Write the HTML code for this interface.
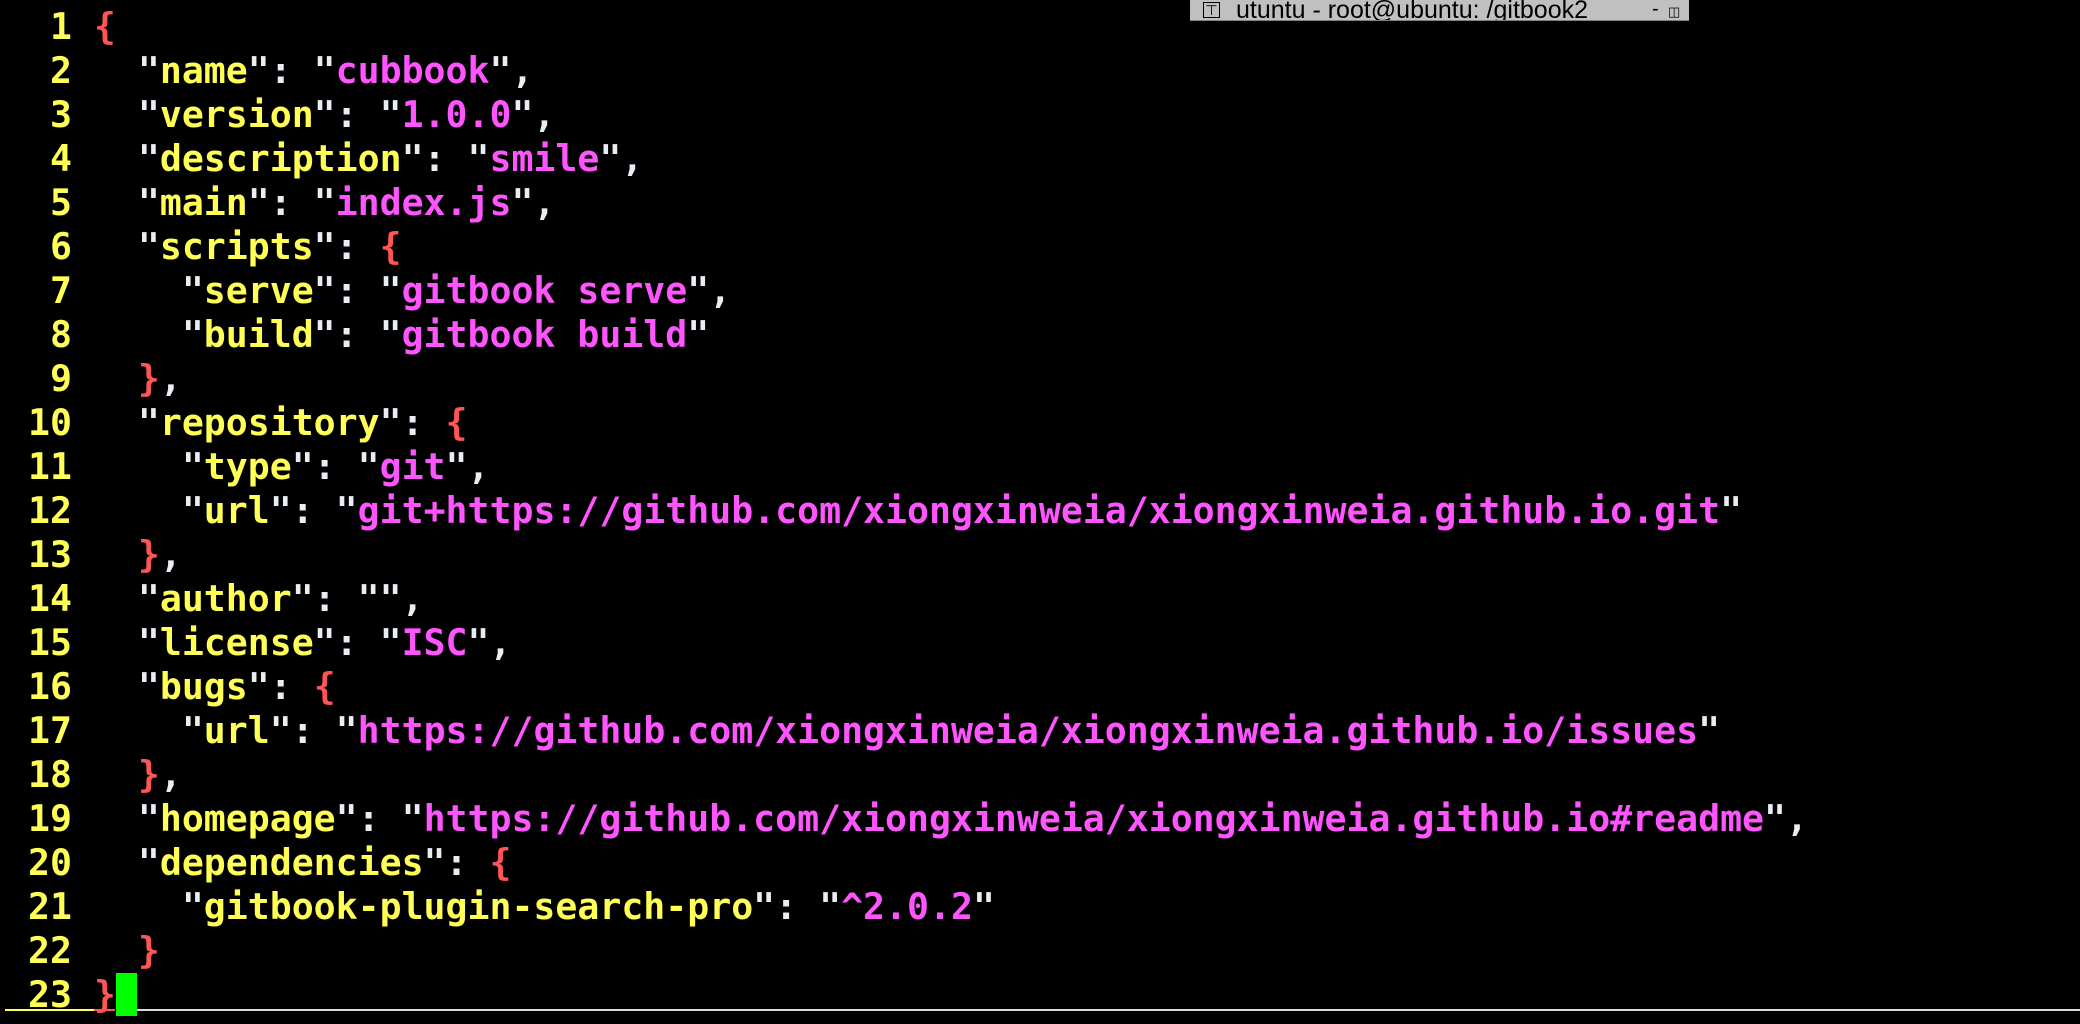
<!DOCTYPE html>
<html><head><meta charset="utf-8"><style>
html,body{margin:0;padding:0;background:#000;width:2080px;height:1024px;overflow:hidden}
pre{position:absolute;left:6px;top:5px;margin:0;font-family:"DejaVu Sans Mono","Liberation Mono",monospace;font-weight:bold;font-size:36.5px;line-height:44px;color:#e8e8e8;white-space:pre}
.n{color:#ffff55}.k{color:#ffff55}.s{color:#ff55ff}.b{color:#ff5555}.p{color:#e8eef4}
#title{position:absolute;left:1190px;top:0;width:499px;height:20px;background:#c0c0c0;border-bottom:1px solid #808080;font-family:"Liberation Sans",sans-serif;font-size:25px;line-height:26px;color:#000;overflow:hidden;white-space:nowrap}
#cur{position:absolute;left:116px;top:973px;width:21px;height:43px;background:#00ff00}
#ul1{position:absolute;left:5px;top:1009px;width:89px;height:2px;background:#ffff55}
#ul2{position:absolute;left:94px;top:1009px;width:21px;height:2px;background:#ff5555}
#ul3{position:absolute;left:137px;top:1009px;width:1943px;height:2px;background:#dcdcdc}
</style></head><body>
<pre><span class="n">  1 </span><span class="b">{</span>
<span class="n">  2 </span>  <span class="p">"</span><span class="k">name</span><span class="p">": "</span><span class="s">cubbook</span><span class="p">",</span>
<span class="n">  3 </span>  <span class="p">"</span><span class="k">version</span><span class="p">": "</span><span class="s">1.0.0</span><span class="p">",</span>
<span class="n">  4 </span>  <span class="p">"</span><span class="k">description</span><span class="p">": "</span><span class="s">smile</span><span class="p">",</span>
<span class="n">  5 </span>  <span class="p">"</span><span class="k">main</span><span class="p">": "</span><span class="s">index.js</span><span class="p">",</span>
<span class="n">  6 </span>  <span class="p">"</span><span class="k">scripts</span><span class="p">": </span><span class="b">{</span>
<span class="n">  7 </span>    <span class="p">"</span><span class="k">serve</span><span class="p">": "</span><span class="s">gitbook serve</span><span class="p">",</span>
<span class="n">  8 </span>    <span class="p">"</span><span class="k">build</span><span class="p">": "</span><span class="s">gitbook build</span><span class="p">"</span>
<span class="n">  9 </span>  <span class="b">}</span><span class="p">,</span>
<span class="n"> 10 </span>  <span class="p">"</span><span class="k">repository</span><span class="p">": </span><span class="b">{</span>
<span class="n"> 11 </span>    <span class="p">"</span><span class="k">type</span><span class="p">": "</span><span class="s">git</span><span class="p">",</span>
<span class="n"> 12 </span>    <span class="p">"</span><span class="k">url</span><span class="p">": "</span><span class="s">git+https://github.com/xiongxinweia/xiongxinweia.github.io.git</span><span class="p">"</span>
<span class="n"> 13 </span>  <span class="b">}</span><span class="p">,</span>
<span class="n"> 14 </span>  <span class="p">"</span><span class="k">author</span><span class="p">": "",</span>
<span class="n"> 15 </span>  <span class="p">"</span><span class="k">license</span><span class="p">": "</span><span class="s">ISC</span><span class="p">",</span>
<span class="n"> 16 </span>  <span class="p">"</span><span class="k">bugs</span><span class="p">": </span><span class="b">{</span>
<span class="n"> 17 </span>    <span class="p">"</span><span class="k">url</span><span class="p">": "</span><span class="s">https://github.com/xiongxinweia/xiongxinweia.github.io/issues</span><span class="p">"</span>
<span class="n"> 18 </span>  <span class="b">}</span><span class="p">,</span>
<span class="n"> 19 </span>  <span class="p">"</span><span class="k">homepage</span><span class="p">": "</span><span class="s">https://github.com/xiongxinweia/xiongxinweia.github.io#readme</span><span class="p">",</span>
<span class="n"> 20 </span>  <span class="p">"</span><span class="k">dependencies</span><span class="p">": </span><span class="b">{</span>
<span class="n"> 21 </span>    <span class="p">"</span><span class="k">gitbook-plugin-search-pro</span><span class="p">": "</span><span class="s">^2.0.2</span><span class="p">"</span>
<span class="n"> 22 </span>  <span class="b">}</span>
<span class="n"> 23 </span><span class="b">}</span></pre>
<div id="cur"></div>
<div id="ul1"></div><div id="ul2"></div><div id="ul3"></div>
<div id="title"><span style="position:absolute;left:13px;top:2px;width:15px;height:14px;border:1px solid #000;font-size:14px;line-height:14px;text-align:center">&#8868;</span><span style="position:absolute;left:46px;top:-3px">utuntu - root@ubuntu: /gitbook2</span><span style="position:absolute;left:462px;top:-4px;font-size:20px">-</span><span style="position:absolute;left:478px;top:-1px;font-size:13px">&#9707;</span></div>
</body></html>
